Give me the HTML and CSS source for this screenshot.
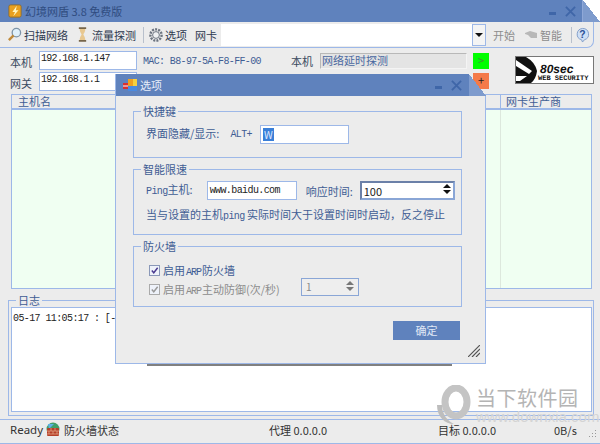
FILE: index.html
```html
<!DOCTYPE html>
<html lang="zh">
<head>
<meta charset="utf-8">
<title>幻境网盾</title>
<link rel="stylesheet" href="styles.css">
</head>
<body>
<div class="app">
  <header class="titlebar">
    <svg class="appicon" viewBox="0 0 16 16"><rect x="1" y="1" width="14" height="14" rx="2" fill="#e8a020" stroke="#8a6a30"/><path d="M10 2 5 9h3l-2 5 6-7H9z" fill="#fff6c0"/></svg>
    <span class="apptitle">幻境网盾 3.8 免费版</span>
    <span class="grow"></span>
    <span class="min"></span>
    <svg class="close" viewBox="0 0 12 12"><path d="M1 1 11 11M11 1 1 11" stroke="#3f66a8" stroke-width="2"/></svg>
  </header>

  <nav class="toolbar">
    <svg class="tool-ic search" viewBox="0 0 16 16"><circle cx="10" cy="6" r="4.5" fill="#dff0fb" stroke="#7d94a8" stroke-width="1.4"/><path d="M7 9 2 14" stroke="#c08a3a" stroke-width="2.6"/></svg>
    <span class="tool">扫描网络</span>
    <svg class="tool-ic glass" viewBox="0 0 12 16"><path d="M2 1h8M2 15h8" stroke="#77664a" stroke-width="2"/><path d="M3 2h6c0 4-2 5-2 6s2 2 2 6H3c0-4 2-5 2-6S3 6 3 2z" fill="#e8c890"/></svg>
    <span class="tool">流量探测</span>
    <span class="sep"></span>
    <svg class="tool-ic gear" viewBox="0 0 16 16"><circle cx="8" cy="8" r="5.6" fill="none" stroke="#6c7480" stroke-width="2.4" stroke-dasharray="2 1.1"/><circle cx="8" cy="8" r="3.4" fill="#eef0f2" stroke="#6c7480"/></svg>
    <span class="tool">选项</span>
    <span class="tool nic">网卡</span>
    <div class="combo"><span class="combo-btn"><i class="down"></i></span></div>
    <span class="tool off start">开始</span>
    <svg class="tool-ic smart" viewBox="0 0 14 10"><path d="M1 3 6 1l7 2v5H7L4 5 1 4z" fill="#b8b8b8"/></svg>
    <span class="tool off">智能</span>
    <span class="sep sep2"></span>
    <svg class="tool-ic help" viewBox="0 0 16 16"><path d="M8 1a6.5 6.2 0 0 1 2 12.1L8 15.5l-1-2.4A6.5 6.2 0 0 1 8 1z" fill="#cfe0f6" stroke="#7f9cc8"/><text x="8" y="11" text-anchor="middle" class="helpq">?</text></svg>
  </nav>

  <section class="info">
    <div class="info-col">
      <div class="ip-row"><span class="lab">本机</span><span class="ipbox">192.168.1.147</span><span class="mac">MAC: B8-97-5A-F8-FF-00</span></div>
      <div class="ip-row"><span class="lab">网关</span><span class="ipbox">192.168.1.1</span></div>
    </div>
    <div class="probe">
      <div class="probe-top">
        <span class="lab">本机</span>
        <span class="probebox">网络延时探测</span>
        <span class="sq green">&gt;</span>
      </div>
      <span class="sq orange">+</span>
    </div>
    <div class="logo">
      <svg class="logo-mark" viewBox="0 0 24 26"><path d="M0 0h10q9 5 11 14-1 8-6 12H0z" fill="#111"/><path d="M0 3 16 14l-3 3L0 9zM0 19l11 0-7 5H0z" fill="#fff"/></svg>
      <div class="logo-text"><b>80sec</b><em>WEB SECURITY</em></div>
    </div>
  </section>

  <section class="list">
    <div class="list-head"><span class="c1">主机名</span><span class="c2">网卡生产商</span></div>
    <div class="list-body"><span class="c1"></span><span class="c2"></span></div>
  </section>

  <fieldset class="log">
    <legend>日志</legend>
    <div class="logbox">05-17 11:05:17 : [-</div>
  </fieldset>

  <footer class="status">
    <span class="ready">Ready</span>
    <svg class="fw" viewBox="0 0 16 16"><circle cx="8" cy="7" r="6.5" fill="#3f9f6a"/><path d="M3 2h6L4 7z" fill="#5fb0e8"/><rect x="2" y="6" width="12" height="8" rx="1" fill="#b5402a"/><path d="M2 9h12M2 12h12M6 6v3M10 6v3M4 9v3M8 9v3M12 9v3" stroke="#e8b090" stroke-width=".7"/></svg>
    <span>防火墙状态</span>
    <span class="proxy">代理 0.0.0.0</span>
    <span class="target">目标 0.0.0.0</span>
    <span class="rate">0B/s</span>
    <svg class="dots" viewBox="0 0 10 10"><path d="M8 1h1v1H8zM5 4h1v1H5zM8 4h1v1H8zM2 7h1v1H2zM5 7h1v1H5zM8 7h1v1H8z" fill="#999"/></svg>
  </footer>

  <div class="watermark">
    <svg class="wm-logo" viewBox="0 0 36 40"><ellipse cx="20" cy="17" rx="11" ry="14" fill="none" stroke="#c4c4c4" stroke-width="7"/><path d="M1 20c0 12 8 19 17 19-6-3-12-9-12-19z" fill="#bdbdbd"/></svg>
    <div class="wm-text"><span class="wm-cn">当下软件园</span><span class="wm-url">www.downxia.com</span></div>
  </div>

  <div class="dialog-shadow"></div>
  <div class="dialog">
    <header class="dlg-title">
      <svg class="dlg-ic" viewBox="0 0 14 14"><rect x="5" y="1" width="5" height="7" fill="#f0a020"/><rect x="10" y="1" width="4" height="7" fill="#f6d040"/><rect x="5" y="8" width="9" height="5" fill="#4a8ae0"/><rect x="0" y="5" width="5" height="6" fill="#d83030"/><path d="M0 8h5" stroke="#fff"/></svg>
      <span class="dlg-name">选项</span>
      <span class="grow"></span>
      <span class="min"></span>
      <svg class="close" viewBox="0 0 12 12"><path d="M1 1 11 11M11 1 1 11" stroke="#3f66a8" stroke-width="2"/></svg>
      <span class="fold"></span>
    </header>
    <div class="dlg-body">
      <fieldset class="grp g1">
        <legend>快捷键</legend>
        <div class="row r-hot">
          <span class="hot-lab">界面隐藏/显示:</span><span class="mono alt">ALT+</span>
          <span class="field hot"><span class="sel">W</span></span>
        </div>
      </fieldset>
      <fieldset class="grp g2">
        <legend>智能限速</legend>
        <div class="row r-ping">
          <span><span class="mono">Ping</span>主机:</span>
          <span class="field host mono">www.baidu.com</span>
          <span class="resp">响应时间:</span>
          <span class="field spin">100<span class="arrows"><i class="up"></i><i class="down"></i></span></span>
        </div>
        <p class="note">当与设置的主机<span class="mono">ping</span> 实际时间大于设置时间时启动，反之停止</p>
      </fieldset>
      <fieldset class="grp g3">
        <legend>防火墙</legend>
        <div class="check"><span class="box"><svg viewBox="0 0 10 10"><path d="M2 5 4.2 7.5 8.5 2" fill="none" stroke="#4a3a90" stroke-width="1.6"/></svg></span><span>启用<span class="arp">ARP</span>防火墙</span></div>
        <div class="check dis"><span class="box"><svg viewBox="0 0 10 10"><path d="M2 5 4.2 7.5 8.5 2" fill="none" stroke="#999" stroke-width="1.6"/></svg></span><span class="dis-t">启用<span class="arp">ARP</span>主动防御(次/秒)</span>
          <span class="field spin2">1<span class="arrows"><i class="up"></i><i class="down"></i></span></span>
        </div>
      </fieldset>
      <div class="actions"><span class="ok">确定</span></div>
    </div>
    <svg class="grip" viewBox="0 0 12 12"><path d="M0 12 12 0M4 12 12 4M8 12 12 8" stroke="#555" stroke-width="1.2"/></svg>
  </div>
</div>
</body>
</html>
```
FILE: styles.css
```css
* { box-sizing: border-box; }
html, body { margin: 0; padding: 0; }
body { width: 600px; height: 444px; overflow: hidden; background: #fff; }
.app {
  position: relative; width: 600px; height: 444px; display: flex; flex-direction: column;
  background: #ececec; color: #333; overflow: hidden;
  font: 11px/16px "Noto Sans CJK SC", sans-serif;
}
.grow { flex: 1; }
.titlebar { height: 22px; flex: none; background: #5f82bd; display: flex; align-items: center; padding-left: 8px; position: relative; }
.appicon { width: 14px; height: 14px; margin-right: 3px; }
.apptitle { color: #2f4c80; }
.min { width: 7px; height: 3px; background: #3f66a8; margin-top: 5px; flex: none; }
.close { width: 11px; height: 11px; margin: 0 24px 0 9px; flex: none; }
.titlebar::after { content: ""; position: absolute; right: 0; top: 0; width: 17px; height: 22px; border-left: 1px solid #8fa8d8; background: linear-gradient(to top right, #7e9bcd 50%, #fff 50%); }

.toolbar { height: 26px; flex: none; display: flex; align-items: center; padding-left: 7px; margin-right: 6px; border-right: 1px solid #9db8e8; border-bottom: 1px solid #9db8e8; border-radius: 0 0 7px 0; color: #2e3a50; }
.tool-ic { flex: none; }
.search { width: 15px; height: 15px; margin-right: 2px; }
.glass { width: 11px; height: 15px; margin: 0 4px 0 9px; }
.gear { width: 16px; height: 16px; margin-right: 1px; }
.tool { flex: none; white-space: nowrap; }
.sep { width: 1px; height: 16px; background: #b8c0cc; margin: 0 4px 0 7px; flex: none; }
.nic { margin-left: 8px; }
.combo { width: 265px; height: 22px; margin-left: 4px; background: #fff; display: flex; justify-content: flex-end; flex: none; }
.combo-btn { width: 14px; height: 22px; border: 1px solid #9db8e8; display: flex; align-items: center; justify-content: center; background: #f4f4f4; }
.down { display: block; width: 0; height: 0; border: 4px solid transparent; border-top: 4px solid #111; border-bottom: 0; }
.up { display: block; width: 0; height: 0; border: 4px solid transparent; border-bottom: 4px solid #111; border-top: 0; }
.off { color: #8c8c8c; }
.start { margin-left: 7px; }
.smart { width: 14px; height: 10px; margin: 0 2px 0 9px; }
.sep2 { margin: 0 3px 0 9px; }
.help { width: 15px; height: 16px; }
.helpq { font: 700 11px "Liberation Sans", sans-serif; fill: #2a4f96; }

.info { height: 46px; flex: none; display: flex; position: relative; padding: 3px 0 0 10px; }
.info-col { width: 281px; flex: none; }
.ip-row { display: flex; height: 21px; align-items: center; }
.lab { width: 29px; flex: none; color: #3a4a60; }
.ipbox { width: 98px; height: 19px; align-self: flex-start; background: #fff; border: 1px solid #9db8e8; padding: 0 0 0 1px; font: 10px/13px "Liberation Mono", monospace; letter-spacing: -.7px; color: #222; }
.mac { margin-left: 6px; font: 10px/16px "Liberation Mono", monospace; letter-spacing: -.64px; color: #3f5d94; white-space: nowrap; }
.probe { width: 198px; flex: none; display: flex; flex-direction: column; align-items: flex-end; }
.probe-top { display: flex; align-items: center; width: 198px; height: 20px; }
.probebox { width: 147px; height: 16px; background: #e4e4e4; border: 1px solid #b8b8b8; border-right-color: #f4f4f4; border-bottom-color: #f4f4f4; color: #4a68a0; line-height: 13px; padding-left: 1px; }
.sq { width: 16px; height: 16px; flex: none; text-align: center; line-height: 15px; color: #4c8a3c; }
.green { background: #0f0; margin-left: 6px; }
.orange { background: #f47a48; color: #222; margin: 2px 0 0 0; }
.logo { width: 79px; height: 28px; margin: 5px 0 0 26px; flex: none; display: flex; background: #fff; border: 1px solid #777; overflow: hidden; color: #111; }
.logo-mark { width: 24px; height: 26px; flex: none; }
.logo-text { display: flex; flex-direction: column; margin-left: -3px; padding-top: 7px; text-rendering: geometricPrecision; }
.logo-text b { font: italic 700 12px/11px "Liberation Sans", sans-serif; margin-left: 3px; }
.logo-text em { font: 700 7px/8px "Liberation Mono", monospace; white-space: nowrap; margin-left: 1px; }

.list { height: 195px; margin: 0 8px 0 11px; flex: none; border: 1px solid #9db8e8; display: flex; flex-direction: column; }
.list-head { height: 15px; flex: none; display: flex; background: #ececec; border-bottom: 2px solid #9db8e8; color: #3f5d94; line-height: 13px; }
.list-body { flex: 1; display: flex; background: #f0fff2; }
.c1 { width: 489px; flex: none; padding-left: 6px; border-right: 1px solid #dde8dd; }
.c2 { flex: 1; padding-left: 5px; }
.list-head .c1 { border-right-color: #9db8e8; }

.log { flex: 1; margin: 5px 6px 3px 8px; padding: 0 1px 1px 2px; border: 1px solid #9db8e8; min-width: 0; min-height: 0; }
.log legend { padding: 0 2px; margin-left: 5px; color: #3f5d94; line-height: 13px; }
.logbox { height: 105px; background: #fff; border: 1px solid #9db8e8; padding: 3px 0 0 1px; font: 10px/16px "Liberation Mono", monospace; letter-spacing: -.6px; color: #222; }

.status { height: 25px; flex: none; border-top: 1px solid #9db8e8; border-bottom: 1px solid #9db8e8; display: flex; align-items: center; padding: 0 0 3px 10px; color: #333; white-space: nowrap; line-height: 12px; }
.ready { font: 11.5px/12px "Noto Sans", sans-serif; width: 35px; flex: none; }
.fw { width: 16px; height: 16px; margin-right: 3px; flex: none; }
.proxy { position: absolute; left: 269px; }
.target { position: absolute; left: 438px; }
.rate { position: absolute; left: 554px; }
.dots { position: absolute; left: 587px; top: 429px; width: 10px; height: 10px; }

.watermark { position: absolute; left: 436px; top: 385px; display: flex; gap: 4px; pointer-events: none; }
.wm-logo { width: 36px; height: 40px; }
.wm-text { display: flex; flex-direction: column; color: #b4b4b4; padding-top: 1px; }
.wm-cn { font-size: 20px; line-height: 24px; letter-spacing: .5px; }
.wm-url { font: 15px/12px "Liberation Sans", sans-serif; color: #d4d4d4; margin-top: 1px; }

.dialog-shadow { position: absolute; left: 147px; top: 360px; width: 305px; height: 6px; background: linear-gradient(#a9c0e6 0 2px, #808080 2px); }
.dialog { position: absolute; left: 115px; top: 74px; width: 371px; height: 290px; border: 1px solid #9db8e8; border-top: 0; border-right: 0; display: flex; flex-direction: column; color: #3f5d94; }
.dlg-title { height: 22px; flex: none; background: linear-gradient(#5f82bd, #5f82bd) no-repeat left top / calc(100% - 17px) 100%; display: flex; align-items: center; padding-left: 7px; position: relative; }
.dlg-ic { width: 14px; height: 14px; margin-right: 3px; }
.dlg-name { color: #e8eefa; }
.dlg-title .close { margin-right: 24px; }
.fold { position: absolute; right: 0; top: 0; width: 17px; height: 22px; background: linear-gradient(to top right, #7e9bcd 50%, transparent 50%); }
.dlg-body { flex: 1; padding: 9px 23px 0 17px; display: flex; flex-direction: column; background: #ececec; border-right: 1px solid #9db8e8; }
.grp { margin: 0; padding: 0; border: 1px solid #9db8e8; min-width: 0; }
.grp legend { margin-left: 7px; padding: 0 2px; line-height: 13px; height: 13px; }
.g1 { height: 53px; }
.g2 { height: 72px; margin-top: 5px; }
.g3 { height: 67px; margin-top: 5px; }
.row { display: flex; align-items: center; white-space: nowrap; }
.r-hot { padding: 0 0 0 12px; height: 20px; margin-top: 6px; }
.hot-lab { margin-top: -3px; }
.alt { margin: 1px 0 0 11px; }
.mono { font: 10px/16px "Liberation Mono", monospace; letter-spacing: -.6px; }
.field { background: #fff; border: 1px solid #9db8e8; display: flex; align-items: center; flex: none; }
.hot { width: 89px; height: 19px; margin-left: 8px; padding-left: 2px; }
.sel { background: #3a7fd8; color: #dfe8ff; font-size: 10px; line-height: 13px; padding: 0 1px; }
.r-ping { padding-left: 12px; height: 19px; margin-top: 5px; }
.host { width: 90px; height: 19px; margin-left: 14px; padding-left: 2px; color: #222; }
.resp { margin-left: 9px; }
.spin { width: 95px; height: 19px; margin-left: 7px; border: 2px solid #8aa6d6; border-top-color: #6b80a8; border-left-color: #6b80a8; padding-left: 2px; color: #222; position: relative; }
.arrows { position: absolute; right: 2px; top: 1px; display: flex; flex-direction: column; gap: 2px; }
.note { margin: 6px 0 0 12px; white-space: nowrap; }
.check { display: flex; align-items: center; height: 19px; margin-left: 15px; white-space: nowrap; }
.check:first-of-type { margin-top: 8px; }
.arp { font: 10px/12px "Liberation Mono", monospace; letter-spacing: -1px; margin: 0 1px; }
.box { width: 11px; height: 11px; border: 1px solid #8a98b8; background: #eef2fa; margin-right: 3px; flex: none; display: flex; }
.dis { color: #8c8c8c; }
.dis .box { border-color: #aaa; }
.dis-t { width: 138px; }
.spin2 { width: 58px; height: 18px; margin-top: -6px; padding-left: 4px; background: #eee; border: 1px solid #8aa6d6; color: #888; position: relative; font-size: 10px; }
.spin2 .arrows { right: 4px; top: 2px; }
.spin2 .up { border-bottom-color: #777; }
.spin2 .down { border-top-color: #777; }
.actions { display: flex; justify-content: flex-end; margin: 14px 2px 0 0; }
.ok { width: 67px; height: 19px; background: #5f82bd; color: #e0e8f6; text-align: center; line-height: 18px; }
.grip { position: absolute; right: 6px; bottom: 6px; width: 12px; height: 12px; }
```
